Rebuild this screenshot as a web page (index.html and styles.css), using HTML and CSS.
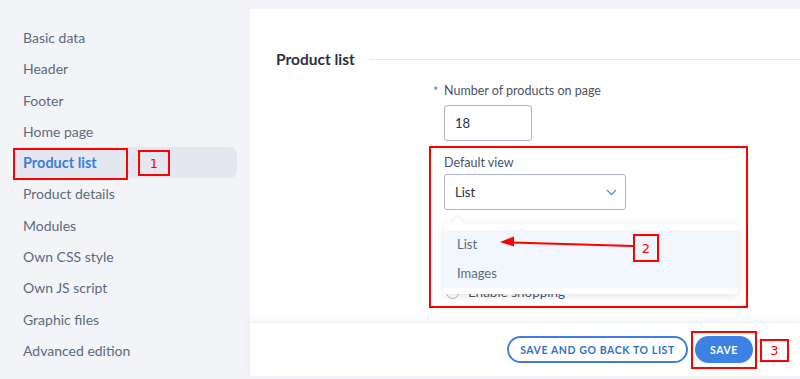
FILE: index.html
```html
<!DOCTYPE html>
<html lang="en">
<head>
<meta charset="UTF-8">
<meta name="viewport" content="width=device-width, initial-scale=1.0">
<title>Settings - Product list</title>
<link rel="stylesheet" href="styles.css">
</head>
<body>
<aside class="sidebar">
    <nav class="menu">
        <a class="menu-item">Basic data</a>
        <a class="menu-item">Header</a>
        <a class="menu-item">Footer</a>
        <a class="menu-item">Home page</a>
        <a class="menu-item active">Product list</a>
        <a class="menu-item">Product details</a>
        <a class="menu-item">Modules</a>
        <a class="menu-item">Own CSS style</a>
        <a class="menu-item">Own JS script</a>
        <a class="menu-item">Graphic files</a>
        <a class="menu-item">Advanced edition</a>
    </nav>
</aside>
<main class="panel">
    <div class="panel-body">
        <div class="section-title">
            <h2>Product list</h2>
            <span class="section-line"></span>
        </div>
        <div class="form">
            <div class="field">
                <label class="field-label"><span class="required">*</span>Number of products on page</label>
                <input class="input small" type="text" value="18">
            </div>
            <div class="field">
                <label class="field-label">Default view</label>
                <div class="select-wrap">
                    <div class="select">
                        <span>List</span>
                        <svg class="chevron" width="11" height="7" viewBox="0 0 11 7"><path d="M1 1l4.5 4.5L10 1" fill="none" stroke="#5b8fe0" stroke-width="1.3"/></svg>
                    </div>
                    <div class="dropdown">
                        <span class="dropdown-tip"></span>
                        <div class="option">List</div>
                        <div class="option">Images</div>
                    </div>
                </div>
            </div>
            <div class="radio-row">
                <span class="radio"></span>
                <span class="radio-text">Enable shopping</span>
            </div>
        </div>
    </div>
    <footer class="panel-footer">
        <button class="btn btn-outline">Save and go back to list</button>
        <button class="btn btn-primary">Save</button>
    </footer>
</main>

<!-- tutorial annotations drawn over the screen -->
<div class="note note-box" style="left:13px;top:148px;width:115px;height:32px"></div>
<div class="note note-num" style="left:138px;top:150px;width:32px;height:26px">1</div>
<div class="note note-box" style="left:429px;top:146px;width:319px;height:162px"></div>
<div class="note note-num" style="left:633px;top:234px;width:26px;height:28px">2</div>
<div class="note note-box" style="left:691px;top:331px;width:66px;height:38px"></div>
<div class="note note-num" style="left:760px;top:339px;width:29px;height:23px">3</div>
<svg class="note arrow" width="800" height="379" viewBox="0 0 800 379">
    <line x1="633" y1="246" x2="512" y2="242.5" stroke="#f00" stroke-width="2"/>
    <path d="M500 242l14-5.5v10z" fill="#f00"/>
</svg>
</body>
</html>
```

FILE: styles.css
```css
body {
    margin: 0;
    height: 379px;
    overflow: hidden;
    display: flex;
    background-color: #f3f4f8;
    font-family: 'Lato', 'Open Sans', sans-serif;
    color: #5d677b;
    position: relative;
}
.sidebar {
    width: 250px;
    flex-shrink: 0;
    padding-top: 22px;
}
.menu {
    display: flex;
    flex-direction: column;
    margin-left: 13px;
    width: 224px;
}
.menu-item {
    height: 31.3px;
    line-height: 31px;
    padding-left: 10px;
    font-size: 14px;
    color: #5f6a7f;
    border-radius: 7px;
}
.menu-item.active {
    background-color: #e4e7ef;
    color: #3b7ddd;
    font-weight: bold;
    font-size: 14.5px;
}
.panel {
    flex: 1;
    margin: 9px 0 3px 0;
    background-color: #ffffff;
    display: flex;
    flex-direction: column;
}
.panel-body {
    flex: 1;
    padding: 40px 0 0 26px;
}
.section-title {
    display: flex;
    align-items: center;
    gap: 15px;
}
.section-title h2 {
    margin: 0;
    font-size: 15.5px;
    font-weight: bold;
    color: #2b3244;
    line-height: 20px;
}
.section-line {
    flex: 1;
    height: 1px;
    background-color: #e6e8ee;
}
.form {
    margin-left: 168px;
    padding-top: 14px;
}
.field {
    margin-bottom: 14px;
}
.field-label {
    display: block;
    position: relative;
    font-size: 12.5px;
    color: #4b5366;
    line-height: 16px;
    margin-bottom: 6px;
}
.required {
    position: absolute;
    left: -11px;
    top: 1px;
    color: #3b7ddd;
}
.input {
    box-sizing: border-box;
    height: 36px;
    border: 1px solid #aeb5c6;
    border-radius: 3px;
    padding: 0 10px;
    font-family: inherit;
    font-size: 13px;
    color: #2b3244;
    outline: none;
}
.input.small {
    width: 88px;
}
.select-wrap {
    position: relative;
    margin-top: -3px;
}
.select {
    box-sizing: border-box;
    width: 182px;
    height: 36px;
    border: 1px solid #aeb5c6;
    border-radius: 3px;
    padding: 0 8px 0 10px;
    display: flex;
    align-items: center;
    justify-content: space-between;
    font-size: 13px;
    color: #2b3244;
}
.dropdown {
    position: absolute;
    left: 0;
    top: 50px;
    width: 294px;
    padding: 6px 0;
    background-color: #ffffff;
    border-radius: 4px;
    box-shadow: 0 2px 10px rgba(40, 50, 70, 0.13);
    z-index: 5;
}
.dropdown-tip {
    position: absolute;
    left: 9px;
    top: -5px;
    width: 10px;
    height: 10px;
    background-color: #ffffff;
    box-shadow: -2px -2px 3px rgba(40, 50, 70, 0.06);
    transform: rotate(45deg);
}
.option {
    position: relative;
    height: 29px;
    line-height: 29px;
    padding-left: 13px;
    background-color: #f2f6fd;
    font-size: 13px;
    color: #5f6a7f;
}
.radio-row {
    display: flex;
    align-items: center;
    gap: 9px;
    margin-top: 74px;
    margin-left: 2px;
    font-size: 13.5px;
    color: #4b5366;
}
.radio {
    width: 11px;
    height: 11px;
    border: 1px solid #aeb5c6;
    border-radius: 50%;
}
.panel-footer {
    height: 54px;
    box-sizing: border-box;
    display: flex;
    justify-content: flex-end;
    align-items: center;
    gap: 7px;
    padding: 0 47px 0 0;
    box-shadow: 0 -4px 8px rgba(30, 40, 70, 0.04);
    border-top: 1px solid #f1f2f6;
}
.btn {
    height: 27px;
    padding: 0;
    border-radius: 14px;
    font-family: inherit;
    font-size: 10.5px;
    font-weight: bold;
    letter-spacing: 0.6px;
    text-transform: uppercase;
    white-space: nowrap;
    cursor: pointer;
}
.btn-outline {
    width: 181px;
    background-color: #ffffff;
    border: 2px solid #3d7ee0;
    color: #3470c8;
}
.btn-primary {
    width: 58px;
    background-color: #3d82e3;
    border: none;
    color: #ffffff;
}
.note {
    position: absolute;
    box-sizing: border-box;
    z-index: 10;
}
.note-box {
    border: 2px solid #ff0000;
}
.note-num {
    border: 2px solid #ff0000;
    color: #ff0000;
    font-family: 'DejaVu Sans', sans-serif;
    font-size: 13px;
    display: flex;
    align-items: center;
    justify-content: center;
}
.arrow {
    left: 0;
    top: 0;
}
```
